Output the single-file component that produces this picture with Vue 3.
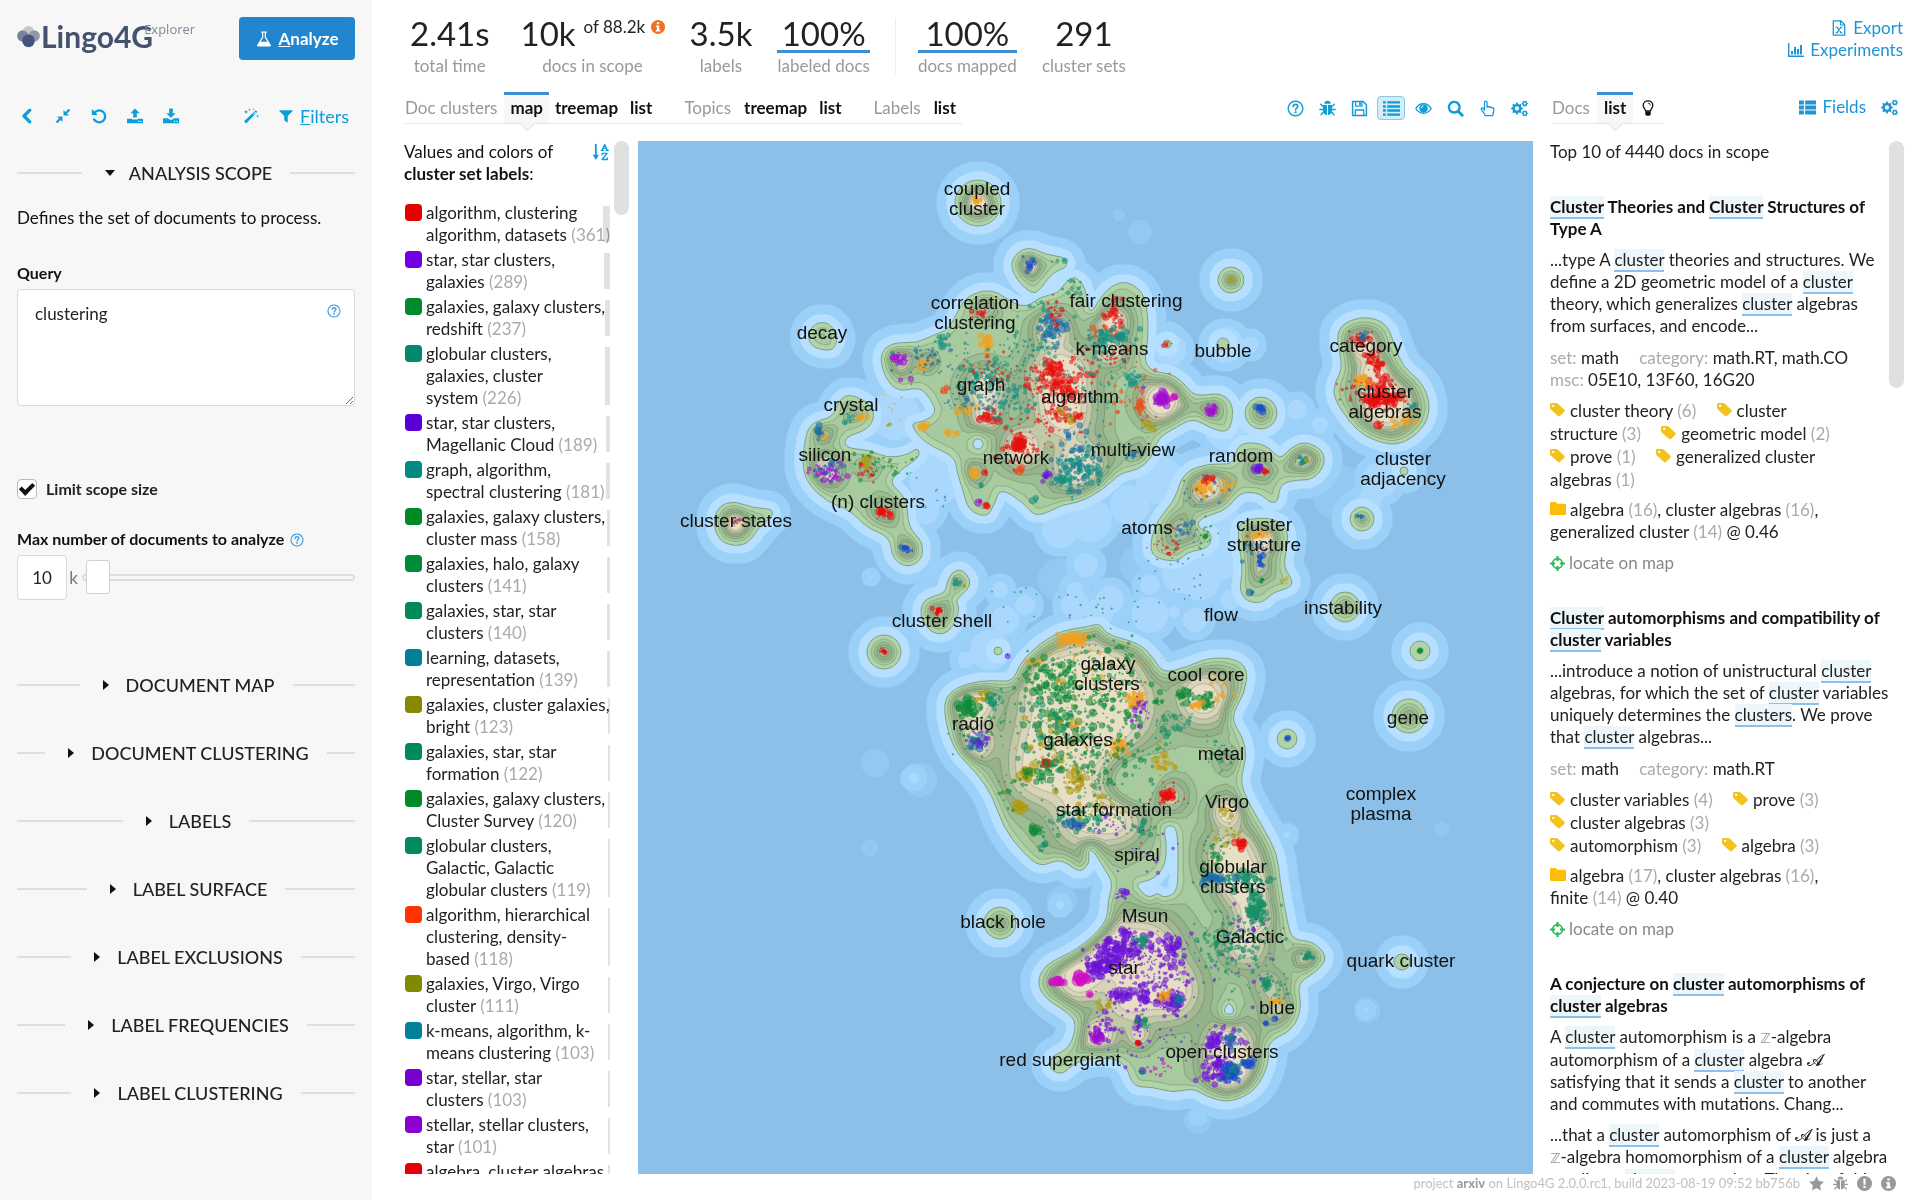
<template>
  <div class="app">
    <aside class="sidebar">
      <div class="brand-row">
        <a href="#" class="brand">
          <Icon name="logo" class="brand-mark" />
          <span class="brand-name">Lingo4G</span>
          <span class="brand-sub">Explorer</span>
        </a>
        <button class="analyze"><Icon name="flask" /><span><u>A</u>nalyze</span></button>
      </div>

      <div class="tools">
        <button v-for="t in ['left', 'compress', 'undo', 'upload', 'download']" :key="t" :aria-label="t" class="tool"><Icon :name="t" /></button>
        <button class="tool wand" aria-label="wand"><Icon name="wand" /></button>
        <button class="tool filters"><Icon name="filter" /><span><u>F</u>ilters</span></button>
      </div>

      <button class="section"><span class="caret open"></span>ANALYSIS SCOPE</button>
      <p class="about">Defines the set of documents to process.</p>

      <label class="field-label" for="query">Query</label>
      <div class="query-box">
        <textarea id="query" v-model="query"></textarea>
        <Icon name="help" class="query-help" />
      </div>

      <div class="check-row">
        <input id="limit" v-model="limit" type="checkbox" />
        <label for="limit">Limit scope size</label>
      </div>

      <label class="field-label max-label" for="maxdocs">Max number of documents to analyze <Icon name="help" class="label-help" /></label>
      <div class="max-row">
        <input id="maxdocs" v-model="maxDocs" type="text" />
        <span>k</span>
        <input v-model="slider" type="range" min="0" max="100" aria-label="Max number of documents" />
      </div>

      <div class="sections">
        <button v-for="s in sections" :key="s" class="section"><span class="caret"></span>{{ s }}</button>
      </div>
    </aside>

    <main class="main">
      <header class="top">
        <div class="stats">
          <template v-for="s in stats" :key="s.label">
            <div v-if="s.split" class="split"></div>
            <div class="stat">
              <span class="num" :class="{ lined: s.lined }">{{ s.value }}<small v-if="s.of">{{ s.of }} <Icon name="info" class="orange" /></small></span>
              <span class="cap">{{ s.label }}</span>
            </div>
          </template>
        </div>
        <nav class="top-links">
          <a href="#"><Icon name="excel" />Export</a>
          <a href="#"><Icon name="chart" />Experiments</a>
        </nav>
      </header>

      <div class="bars">
        <nav class="tabs">
          <span>Doc clusters</span>
          <a href="#" class="active">map</a><a href="#">treemap</a><a href="#">list</a>
          <span class="next">Topics</span>
          <a href="#">treemap</a><a href="#">list</a>
          <span class="next">Labels</span>
          <a href="#">list</a>
        </nav>
        <div class="map-tools">
          <button v-for="t in mapTools" :key="t" :aria-label="t" :class="{ on: t === 'list' }"><Icon :name="t" /></button>
        </div>
        <div class="docs-bar">
          <nav class="tabs">
            <span>Docs</span>
            <a href="#" class="active">list</a>
            <a href="#" aria-label="hints" class="bulb"><Icon name="bulb" /></a>
          </nav>
          <div class="docs-tools">
            <button><Icon name="fields" />Fields</button>
            <button aria-label="settings"><Icon name="cogs" /></button>
          </div>
        </div>
      </div>

      <div class="content">
        <section class="legend">
          <div class="legend-body">
            <div class="legend-head">
              <div>Values and colors of<br /><b>cluster set labels</b>:</div>
              <button aria-label="sort"><Icon name="sort" /></button>
            </div>
            <ul>
              <li v-for="(l, i) in labels" :key="i">
                <i class="swatch" :style="{ background: l[2] }"></i>
                <span>{{ l[0] }}&nbsp;<em>({{ l[1] }})</em></span>
                <i class="bar" :style="{ width: Math.max(2, Math.round(l[1] / 50)) + 'px' }"></i>
              </li>
            </ul>
          </div>
          <div class="scroll"><i class="short"></i></div>
        </section>

        <section class="map">
          <canvas ref="canvas" :width="VIEW.w" :height="VIEW.h"></canvas>
          <svg :viewBox="`${VIEW.x} ${VIEW.y} ${VIEW.w} ${VIEW.h}`" preserveAspectRatio="xMidYMid slice">
            <text v-for="p in places" :key="p[0] + p[1]" :x="p[1]" :y="p[2]">{{ p[0] }}</text>
          </svg>
        </section>

        <section class="docs">
          <div class="docs-body">
            <p class="docs-top">Top 10 of 4440 docs in scope</p>
            <article v-for="(d, i) in docs" :key="i">
              <h3><Marked :text="d.title" /></h3>
              <p v-for="t in d.text" :key="t" class="excerpt"><Marked :text="t" /></p>
              <template v-if="d.meta">
                <p class="meta"><template v-for="m in d.meta" :key="m[0]"><span><em>{{ m[0] }}:</em> {{ m[1] }}</span>{{ ' ' }}</template></p>
                <p class="tags"><template v-for="t in d.tags" :key="t[0]"><span class="tag"><span class="first"><Icon name="tag" />{{ head(t) }}</span>{{ rest(t) }}&nbsp;<em>({{ t[1] }})</em></span>{{ ' ' }}</template></p>
                <p class="folder"><Icon name="folder" /><template v-for="(f, k) in d.folders" :key="f[0]">{{ k ? ', ' : '' }}{{ f[0] }}&nbsp;<em>({{ f[1] }})</em></template> @ {{ d.score }}</p>
                <a href="#" class="locate"><Icon name="target" />locate on map</a>
              </template>
            </article>
          </div>
          <div class="scroll"><i class="long"></i></div>
        </section>
      </div>

      <footer>
        <span>project <b>arxiv</b> on Lingo4G 2.0.0.rc1, build 2023-08-19 09:52 bb756b</span>
        <Icon name="star" /><Icon name="bug" /><Icon name="alert" /><Icon name="info" />
      </footer>
    </main>
  </div>
</template>

<script setup>
import { h, ref, onMounted } from 'vue'

const query = ref('clustering')
const limit = ref(true)
const maxDocs = ref('10')
const slider = ref(1)
const canvas = ref(null)

// ---- icons, all on a 16x16 grid
const gear = (x, y, r, t) => {
  let d = ''
  const n = t * 4
  for (let i = 0; i < n; i++) {
    const a = ((i - 0.5) / n) * Math.PI * 2
    const rr = i % 4 < 2 ? r : r * 0.76
    d += (i ? 'L' : 'M') + (x + rr * Math.cos(a)).toFixed(2) + ' ' + (y + rr * Math.sin(a)).toFixed(2)
  }
  const c = r * 0.36
  return d + `ZM${x - c} ${y}a${c} ${c} 0 1 0 ${2 * c} 0a${c} ${c} 0 1 0 ${-2 * c} 0Z`
}
const line = (d, w = 1.4) => `<path d="${d}" fill="none" stroke="currentColor" stroke-width="${w}" stroke-linecap="round" stroke-linejoin="round"/>`
const fill = (d) => `<path d="${d}" fill="currentColor" fill-rule="evenodd"/>`

const icons = {
  logo: '<circle cx="8" cy="4.6" r="3.9" fill="#c3c7cc"/><circle cx="4" cy="7.6" r="3.9" fill="#77839a"/><circle cx="12" cy="7.6" r="3.9" fill="#8f99ab"/><circle cx="8" cy="11" r="4.4" fill="#44547a"/>',
  flask: fill('M5 .5h6v1.3h-1v4.4l4.6 7.2c.7 1.2.1 2.2-1.2 2.2H2.6c-1.3 0-1.9-1-1.2-2.2L6 6.2V1.8H5zM7.3 6.5 4.6 10.8h6.8L8.7 6.5V1.8H7.3z'),
  left: line('M10.8 2.2 5 8l5.8 5.8', 3.2),
  compress: fill('M7.5 8.5v5.4l-1.9-1.9-3.3 3.3-1.6-1.6L4 10.4 2.1 8.5zM8.5 7.5V2.1l1.9 1.9L13.7.7l1.6 1.6L12 5.6l1.9 1.9z'),
  undo: line('M3.6 4.4A6 6 0 1 1 3 11.4', 2.3) + fill('M.8 1v6h6z'),
  upload: fill('M8 .5l4.6 4.8H9.8v4.2H6.2V5.3H3.4zM0 10.8h5.2v.7h5.6v-.7H16v4.4H0zM11 12.7v1.2h1.2v-1.2zM13.2 12.7v1.2h1.2v-1.2z'),
  download: fill('M6.2.5h3.6v4.7h2.8L8 10 3.4 5.2h2.8zM0 10.3h4.7L8 12.2l3.3-1.9H16v4.9H0zM11 12.7v1.2h1.2v-1.2zM13.2 12.7v1.2h1.2v-1.2z'),
  wand: fill('M12.8 2.2l1.6 1.6L3.2 15.4 1 13.3zM12.6 3.7 10 6.3l.6.5 2.6-2.6zM6.5.3l.4 1.1 1.1.4-1.1.4-.4 1.1-.4-1.1L5 1.8l1.1-.4zM3 1.8l.6 1.5 1.5.6-1.5.6L3 6l-.6-1.5L.9 3.9l1.5-.6zM14.6 6.6l.4 1 1 .4-1 .4-.4 1-.4-1-1-.4 1-.4zM10.4.2l.3.8.8.3-.8.3-.3.8-.3-.8-.8-.3.8-.3z'),
  filter: fill('M1 1.5h14c.6 0 .8.6.4 1L10 8v6.8c0 .5-.5.7-.9.4L6.3 13c-.2-.2-.3-.4-.3-.6V8L.6 2.5c-.4-.4-.2-1 .4-1z'),
  help: line('M8 1.2a6.8 6.8 0 1 0 .01 0z', 1.3) + line('M5.9 6.2c.1-2.7 4.3-2.6 4.2-.1 0 1.5-2 1.6-2 3.1', 1.6) + fill('M7.1 10.7h1.9v1.7H7.1z'),
  info: fill('M8 0a8 8 0 1 0 .01 0zM6.7 2.7h2.7v2.2H6.7zM5.6 6.3h3.8v5h1.2v1.8H5.5v-1.8h1.2V8.1H5.6z'),
  alert: fill('M8 0a8 8 0 1 0 .01 0zM6.7 2.8h2.6L9 9.2H7zM6.8 10.4h2.4v2.3H6.8z'),
  excel: line('M2.3.8h7.4l4 4v10.4H2.3z', 1.3) + line('M9.5 1v4h4M5.8 7.2l4.4 5.6M10.2 7.2l-4.4 5.6M5 7.2h1.7M9.3 7.2H11M5 12.8h1.7M9.3 12.8H11', 1.1),
  chart: fill('M0 1h1.4v12.6H16V15H0zM3 9h2v3.6H3zM6 5h2v7.6H6zM9 7h2v5.6H9zM12 3h2v9.6h-2z'),
  bug: fill('M5 3.6a3 3 0 0 1 6 0zM4 4.6h3.5v9.8C5 14 3.6 12 3.6 9.5zM8.5 4.6H12l.4 4.9c0 2.5-1.4 4.5-3.9 4.9z') + line('M3.8 6.2 1.6 4M12.2 6.2 14.4 4M3.6 9H.8M12.4 9h2.8M4 11.5 1.8 14M12 11.5l2.2 2.5', 1.3),
  save: line('M1.5 1.5h10l3 3v10h-13z') + line('M4.3 1.7v4h6v-4M4 14.3V9.4h8v4.9', 1.2) + fill('M7.6 2h1.7v3H7.6z'),
  list: fill('M0 1.2h2.6v2.2H0zM4 1.2h12v2.2H4zM0 5h2.6v2.2H0zM4 5h12v2.2H4zM0 8.8h2.6V11H0zM4 8.8h12V11H4zM0 12.6h2.6v2.2H0zM4 12.6h12v2.2H4z'),
  eye: line('M.8 8C4.2 2 11.8 2 15.2 8 11.8 14 4.2 14 .8 8z', 1.3) + fill('M8 3.9a4 4 0 1 0 .01 0z') + '<path d="M6 7.6a2 2 0 0 1 2-2" fill="none" stroke="#fff" stroke-width=".8"/>',
  search: line('M6.8 1.8a5 5 0 1 0 .01 0z', 2.2) + line('M10.8 10.8 14.3 14.3', 2.7),
  hand: line('M5.2 9.4V2.3a1.2 1.2 0 0 1 2.4 0v4.5c.3-1 2.2-.9 2.3.3.5-.8 2-.6 2.2.4.6-.5 1.9-.2 1.9 1.1 0 2.8-.9 3.6-1.1 6.2H5.8C5.6 12.7 3.4 11 2.2 9c-.5-1.3.9-2 1.7-1.2z', 1.2),
  cogs: fill(gear(5.6, 8, 5.6, 8) + gear(13, 3.4, 3, 6) + gear(13, 12.6, 3, 6)),
  bulb: line('M5.6 11C5.4 9 3.2 8 3.2 5.3c0-6 9.6-6 9.6 0C12.8 8 10.6 9 10.4 11z', 1.3) + line('M8.2 3.2c1.2 0 2 .7 2 1.7', 0.9) + fill('M5.3 11.6h5.4v2.6L9.3 15.7H6.7L5.3 14.2z'),
  fields: fill('M0 1.5h4.6v3.6H0zM5.8 1.5H16v3.6H5.8zM0 6.2h4.6v3.6H0zM5.8 6.2H16v3.6H5.8zM0 10.9h4.6v3.6H0zM5.8 10.9H16v3.6H5.8z'),
  sort: line('M3.6 1v12', 1.7) + fill('M.6 10.6h6L3.6 15.6z') + line('M9.4 6.3 11.9.9l2.5 5.4M8.7 6.5h2M13.2 6.5h2.2M10.4 4.6h3M9.6 10.6V9.3h4.6L9.5 15h4.9v-1.4', 1.3),
  tag: fill('M0 2.4C0 1.5.6 1 1.4 1h5.2c.6 0 1.3.3 1.8.8l6.9 6.5c.7.7.7 1.3 0 2L10.6 15c-.7.6-1.3.6-2 0L.9 8C.4 7.5 0 6.9 0 6.3zM3.4 2.8a1.3 1.3 0 1 0 .01 0z'),
  folder: fill('M0 2.5C0 1.6.5 1 1.4 1h3.9C6.3 1 6.8 1.7 6.8 2.7h7.6c1 0 1.6.6 1.6 1.5v8.3c0 1-.6 1.5-1.5 1.5h-13C.6 14 0 13.5 0 12.5z'),
  target: line('M8 2.8A5.2 5.2 0 0 0 2.8 8 5.2 5.2 0 0 0 8 13.2 5.2 5.2 0 0 0 13.2 8 5.2 5.2 0 0 0 8 2.8z', 1.7) + fill('M6.9 0h2.2v5.4H6.9zM6.9 10.6h2.2V16H6.9zM0 6.9h5.4v2.2H0zM10.6 6.9H16v2.2h-5.4z'),
  star: fill('M8 .3l2.4 5 5.4.8-3.9 3.9.9 5.5L8 12.9l-4.8 2.6.9-5.5L.2 6.1l5.4-.8z'),
}
const Icon = (props) => h('svg', { class: 'icon', viewBox: '0 0 16 16', 'aria-hidden': 'true', innerHTML: icons[props.name] })
Icon.props = ['name']

// words between asterisks are query hits, _x_ is a dimmed symbol
const Marked = (props) =>
  props.text.split(/(\*[^*]+\*|_[^_]+_)/).map((p) => {
    if (p[0] === '*') return h('mark', p.slice(1, -1))
    if (p[0] === '_') return h('span', { class: 'dim' }, p.slice(1, -1))
    return p
  })
Marked.props = ['text']

// the tag icon must stay on the line of the first word
const head = (t) => t[0].split(' ')[0]
const rest = (t) => t[0].slice(head(t).length)

const sections = ['DOCUMENT MAP', 'DOCUMENT CLUSTERING', 'LABELS', 'LABEL SURFACE', 'LABEL EXCLUSIONS', 'LABEL FREQUENCIES', 'LABEL CLUSTERING']

const stats = [
  { value: '2.41s', label: 'total time' },
  { value: '10k', of: 'of 88.2k', label: 'docs in scope' },
  { value: '3.5k', label: 'labels' },
  { value: '100%', label: 'labeled docs', lined: true },
  { value: '100%', label: 'docs mapped', lined: true, split: true },
  { value: '291', label: 'cluster sets' },
]

const mapTools = ['help', 'bug', 'save', 'list', 'eye', 'search', 'hand', 'cogs']

const labels = [
  ['algorithm, clustering algorithm, datasets', 361, '#e60000'],
  ['star, star clusters, galaxies', 289, '#7300e0'],
  ['galaxies, galaxy clusters, redshift', 237, '#008a2e'],
  ['globular clusters, galaxies, cluster system', 226, '#008a6c'],
  ['star, star clusters, Magellanic Cloud', 189, '#5a00d6'],
  ['graph, algorithm, spectral clustering', 181, '#008a85'],
  ['galaxies, galaxy clusters, cluster mass', 158, '#008a24'],
  ['galaxies, halo, galaxy clusters', 141, '#008a3a'],
  ['galaxies, star, star clusters', 140, '#008a55'],
  ['learning, datasets, representation', 139, '#007f96'],
  ['galaxies, cluster galaxies, bright', 123, '#858a00'],
  ['galaxies, star, star formation', 122, '#008a58'],
  ['galaxies, galaxy clusters, Cluster Survey', 120, '#008a2a'],
  ['globular clusters, Galactic, Galactic globular clusters', 119, '#008a62'],
  ['algorithm, hierarchical clustering, density-based', 118, '#ff3300'],
  ['galaxies, Virgo, Virgo cluster', 111, '#808a00'],
  ['k-means, algorithm, k-means clustering', 103, '#00839a'],
  ['star, stellar, star clusters', 103, '#7a00d0'],
  ['stellar, stellar clusters, star', 101, '#8c00d2'],
  ['algebra, cluster algebras, cluster', 98, '#e6000a'],
]

const docs = [
  {
    title: '*Cluster* Theories and *Cluster* Structures of Type A',
    text: ['...type A *cluster* theories and structures. We define a 2D geometric model of a *cluster* theory, which generalizes *cluster* algebras from surfaces, and encode...'],
    meta: [['set', 'math'], ['category', 'math.RT, math.CO'], ['msc', '05E10, 13F60, 16G20']],
    tags: [['cluster theory', 6], ['cluster structure', 3], ['geometric model', 2], ['prove', 1], ['generalized cluster algebras', 1]],
    folders: [['algebra', 16], ['cluster algebras', 16], ['generalized cluster', 14]],
    score: '0.46',
  },
  {
    title: '*Cluster* automorphisms and compatibility of *cluster* variables',
    text: ['...introduce a notion of unistructural *cluster* algebras, for which the set of *cluster* variables uniquely determines the *clusters*. We prove that *cluster* algebras...'],
    meta: [['set', 'math'], ['category', 'math.RT']],
    tags: [['cluster variables', 4], ['prove', 3], ['cluster algebras', 3], ['automorphism', 3], ['algebra', 3]],
    folders: [['algebra', 17], ['cluster algebras', 16], ['finite', 14]],
    score: '0.40',
  },
  {
    title: 'A conjecture on *cluster* automorphisms of *cluster* algebras',
    text: [
      'A *cluster* automorphism is a _ℤ_-algebra automorphism of a *cluster* algebra 𝓐 satisfying that it sends a *cluster* to another and commutes with mutations. Chang...',
      '...that a *cluster* automorphism of 𝓐 is just a _ℤ_-algebra homomorphism of a *cluster* algebra sending a *cluster* to another. The aim of this article is to prove it.',
    ],
  },
]

// ---- map
const VIEW = { x: 638, y: 141, w: 895, h: 1033 }

const places = [
  ['coupled', 977, 195], ['cluster', 977, 215], ['correlation', 975, 309], ['clustering', 975, 329],
  ['fair clustering', 1126, 307], ['k-means', 1112, 355], ['decay', 822, 339], ['bubble', 1223, 357],
  ['graph', 981, 391], ['algorithm', 1080, 403], ['crystal', 851, 411], ['silicon', 825, 461],
  ['network', 1016, 464], ['multi-view', 1133, 456], ['random', 1241, 462], ['category', 1366, 352],
  ['cluster', 1385, 398], ['algebras', 1385, 418], ['cluster', 1403, 465], ['adjacency', 1403, 485],
  ['(n) clusters', 878, 508], ['cluster states', 736, 527], ['atoms', 1147, 534], ['cluster', 1264, 531],
  ['structure', 1264, 551], ['instability', 1343, 614], ['flow', 1221, 621], ['cluster shell', 942, 627],
  ['galaxy', 1108, 670], ['clusters', 1107, 690], ['cool core', 1206, 681], ['radio', 973, 730],
  ['gene', 1408, 724], ['galaxies', 1078, 746], ['metal', 1221, 760], ['star formation', 1114, 816],
  ['Virgo', 1227, 808], ['complex', 1381, 800], ['plasma', 1381, 820], ['spiral', 1137, 861],
  ['globular', 1233, 873], ['clusters', 1233, 893], ['Msun', 1145, 922], ['black hole', 1003, 928],
  ['Galactic', 1250, 943], ['quark cluster', 1401, 967], ['star', 1124, 974], ['blue', 1277, 1014],
  ['open clusters', 1222, 1058], ['red supergiant', 1060, 1066],
]

// coast lines
const coasts = [
  [880,358,885,347,898,342,917,343,933,335,948,330,957,313,965,298,983,290,998,292,1012,303,1027,307,1040,297,1058,293,1065,283,1073,276,1083,283,1087,297,1090,315,1100,298,1112,285,1127,281,1143,292,1148,313,1148,343,1144,361,1153,372,1170,373,1183,382,1193,395,1207,395,1220,393,1232,402,1233,420,1227,433,1210,428,1193,418,1175,428,1158,438,1152,458,1138,470,1120,473,1103,490,1080,502,1062,505,1053,510,1035,517,1023,502,1000,488,995,503,987,518,968,510,963,490,957,473,955,457,933,447,920,438,910,423,923,422,937,413,930,398,920,387,898,392,885,378],
  [1010,265,1017,252,1030,247,1047,255,1065,257,1068,267,1053,272,1042,287,1035,294,1027,290,1017,280],
  [806,433,813,422,833,417,837,403,848,393,870,403,875,417,867,430,845,437,845,448,870,450,887,458,907,455,918,447,920,457,903,468,888,482,907,498,908,527,923,542,922,560,907,568,892,558,890,537,867,528,850,510,827,502,807,483,802,463],
  [713,520,720,505,735,501,753,508,773,509,772,517,758,528,750,542,735,547,718,540],
  [807,335,815,323,828,322,838,335,835,348,827,351,812,347],
  [947,582,952,572,962,569,971,580,968,590,955,600,960,609,953,627,943,635,930,632,920,617,922,603,930,597,945,593],
  [1336,337,1343,323,1365,316,1387,323,1395,347,1403,367,1423,383,1431,407,1423,430,1397,447,1367,438,1350,423,1333,397,1335,382,1343,367],
  [1237,447,1247,442,1267,445,1280,460,1290,448,1305,441,1323,450,1325,465,1313,480,1293,480,1280,485,1278,502,1270,503,1260,493,1240,492,1227,510,1200,518,1197,528,1212,532,1210,548,1187,552,1178,562,1153,558,1150,543,1157,520,1175,500,1183,472,1210,463,1233,465],
  [1237,533,1242,520,1270,517,1287,527,1288,543,1283,567,1293,580,1290,588,1273,592,1263,603,1247,602,1239,590,1243,570],
  [943,710,948,693,967,683,993,680,1013,682,1020,663,1040,643,1063,630,1087,627,1100,623,1107,635,1140,643,1155,660,1163,673,1187,667,1207,658,1233,658,1248,668,1245,693,1230,718,1243,737,1247,757,1240,780,1247,800,1263,827,1277,853,1280,880,1287,920,1292,940,1313,941,1328,957,1317,972,1297,983,1302,1007,1293,1030,1267,1042,1270,1060,1257,1090,1230,1103,1207,1097,1193,1088,1173,1093,1153,1087,1133,1087,1127,1067,1113,1057,1077,1060,1063,1075,1050,1070,1050,1057,1070,1048,1077,1023,1067,1012,1043,997,1037,980,1047,963,1077,950,1107,923,1108,900,1113,883,1105,870,1093,850,1088,851,1090,863,1080,873,1067,863,1057,860,1040,867,1023,853,1003,827,993,797,977,773,953,750],
]
const lakes = [
  [1163,827,1175,825,1178,840,1178,870,1177,893,1163,898,1158,892,1150,898,1142,893,1135,883,1153,880,1165,866,1167,845],
  [1223,1012,1229,1001,1235,1012,1229,1015],
]
// round islands: x, y, radius
const islets = [
  [978,203,23],[884,652,17],[1231,280,13],[1261,413,16],[1362,519,12],[1345,607,15],[1420,651,10],
  [1409,716,17],[1287,739,10],[1000,923,16],[1402,962,8],[1167,344,4],[1223,344,6],[1404,471,4],[998,651,4],
]
// shallow water without land
const shelves = [
  [895,415,25],[935,480,26],[925,510,14],[1170,350,16],[1225,345,18],[1250,345,8],[1297,410,10],[1225,430,20],
  [1160,480,24],[1130,505,20],[1090,520,22],[1060,530,18],[1225,535,26],[1220,560,20],[1200,580,20],[1180,575,18],
  [1150,585,10],[1086,565,12],[1075,590,8],[1000,590,8],[1025,605,10],[1005,620,14],[990,650,20],[966,660,8],
  [1075,605,14],[1100,612,14],[1150,615,18],[1174,612,6],[1110,600,14],[1380,480,18],[1370,500,12],[1320,425,8],
  [914,778,5],[1195,620,12],[1060,905,4],[1366,1010,2],[1198,1117,1],[871,577,1],[1287,835,3],[1230,600,10],[1055,490,30],
]
const faint = [[1119,215,6],[1140,232,12],[875,763,14],[920,780,17],[870,848,8],[1080,430,8],[1442,829,7],[1062,900,15],[1287,835,13],[1198,1120,14],[1367,1010,13],[871,577,7],[1340,493,28],[1060,580,22],[1140,565,20],[1185,600,22]]

// hill tops: x, y, spread, height; a negative height digs a hollow
const hills = [
  [978,202,10,7],[1029,265,8,6],[985,308,9,4],[899,360,9,6],[926,361,7,4],[1052,330,13,7],[1112,322,12,7],[1110,350,12,6],
  [985,388,15,7],[985,415,12,6],[1060,375,22,8],[1063,412,22,7],[1022,447,15,7],[1078,465,20,7],[1161,400,15,8],[1210,408,8,4],
  [975,472,8,4],[1138,452,8,3],[825,470,11,7],[822,432,8,4],[884,510,10,4],[907,549,8,5],[868,466,8,3],[852,412,8,2],
  [735,523,10,7],[938,612,9,4],[957,582,6,3],[1362,345,12,7],[1373,373,13,7],[1386,405,19,8],[1207,487,13,7],[1260,468,9,4],
  [1303,459,10,6],[1180,530,12,4],[1261,540,11,7],[1258,567,10,4],[973,703,16,8],[975,742,14,7],[1055,685,27,7],[1095,675,30,7],
  [1115,705,30,7],[1055,735,32,7],[1100,740,28,6],[1040,772,26,6],[1080,785,24,5],[1085,818,26,6],[1118,818,20,6],[1203,698,21,7],[1168,795,13,5],
  [1228,760,9,3],[1227,812,12,7],[1232,855,20,7],[1245,885,18,8],[1254,915,14,7],[1245,945,17,6],[1105,950,25,7],[1145,950,26,7],
  [1168,990,24,7],[1078,978,18,7],[1128,1000,22,6],[1098,1035,13,7],[1138,1035,10,5],[1228,1045,19,7],[1230,1070,19,7],
  [1306,957,9,5],[1268,985,13,4],[1277,1008,13,4],[884,652,8,4],[1231,280,6,4],[1261,413,8,3],[1362,519,5,3],[1345,607,7,3],
  [1409,716,8,3],[1000,923,8,3],[823,335,8,1],[1133,780,17,-5],[1070,712,9,-2],
]

const C = {
  r: '#e6100f', o: '#f2a01e', ro: '#f04a1a', t: '#128f82', b: '#1a6ca8', n: '#1a50c8', g: '#0f8a38', G: '#178f68',
  p: '#a010d0', v: '#6c14d8', y: '#b09a10', m: '#cf10c4',
}
// document dots: colour, x, y, spread x, spread y, count, max radius
const dots = [
  ['o',978,200,3,2,14,3],['n',1029,265,3,4,22,3],['t',1057,260,4,1,4,3],['t',1075,285,6,6,18,2],
  ['r',978,313,7,3,20,3],['t',943,340,4,4,16,4],['p',899,359,5,3,24,4],['o',926,361,5,4,22,3],['b',928,360,9,7,16,2],
  ['p',905,380,5,2,4,3],['o',987,343,5,6,24,4],['b',1052,328,8,9,70,4],['r',1055,310,5,10,26,3],['t',1042,312,7,6,14,3],
  ['r',1113,318,6,12,40,4],['ro',1105,332,10,5,24,3],['v',1115,325,1,1,2,5],['t',1115,338,13,6,55,4],['t',1100,348,14,10,50,3],['r',1110,356,14,8,26,2],
  ['t',983,375,15,9,70,3],['r',985,372,16,10,24,2],['b',975,400,18,14,70,2],['o',967,409,5,3,22,4],['ro',943,391,3,2,6,4],['r',990,418,6,4,26,4],['t',1000,400,25,14,80,3],
  ['r',1056,367,5,4,30,5],['r',1050,380,17,15,60,4],['r',1072,380,14,18,55,4],['r',1065,415,15,15,50,3],['y',1068,416,4,4,12,4],['r',1078,416,3,3,12,4],['r',1040,395,25,22,80,2],
  ['r',1020,445,4,4,40,6],['ro',1020,470,4,2,12,5],['r',1022,447,12,12,50,3],['b',1078,460,14,18,100,3],['t',1080,470,14,14,90,4],['t',1062,480,6,4,24,4],['t',1035,500,2,2,6,4],
  ['b',930,360,22,12,40,2],['t',1010,360,24,18,60,2],['t',1035,345,20,16,50,2],['t',1100,390,26,24,60,2],['ro',1130,395,20,20,40,2],
  ['p',1161,399,5,4,60,5],['m',1173,398,3,2,8,4],['y',1150,428,4,5,20,4],['ro',1142,408,3,9,18,4],['t',1135,380,6,5,20,4],['b',1135,452,5,4,16,3],['v',1143,387,1,1,2,4],
  ['p',1213,409,3,3,22,4],['n',1261,409,3,2,20,4],['y',1231,279,2,2,8,3],['r',1168,344,4,2,6,3],
  ['o',923,426,3,2,12,5],['o',953,433,5,3,16,3],['o',973,472,3,2,12,5],['r',986,473,2,1,4,3],['t',981,486,1,1,4,4],['p',980,502,2,1,5,4],['r',987,505,1,1,4,4],['v',1047,475,3,4,12,3],
  ['t',850,418,6,5,12,3],['o',863,416,4,3,12,3],['b',820,432,3,4,14,4],['o',825,437,3,1,8,3],['b',828,470,9,7,50,3],['p',827,474,11,6,34,3],['y',868,460,5,5,20,3],['r',865,472,9,6,20,2],['g',882,466,22,8,40,2],
  ['r',884,512,4,3,34,4],['n',907,548,3,2,18,3],['o',736,522,3,2,10,3],['v',737,521,2,2,5,2],['r',937,611,3,2,24,4],['t',957,583,2,2,8,3],['y',965,586,1,1,4,3],['r',884,651,2,2,14,3],
  ['r',1360,338,8,4,36,3],['b',1364,336,3,2,9,3],['r',1375,362,6,9,44,4],['r',1382,400,14,5,110,5],['r',1383,385,10,5,44,4],['o',1362,381,7,4,26,4],['r',1381,424,3,2,8,5],['o',1405,422,9,5,30,3],['t',1413,405,4,3,12,3],['r',1350,390,10,12,20,2],
  ['o',1204,487,6,5,40,4],['r',1208,480,4,4,16,4],['o',1225,487,5,7,20,3],['b',1205,490,16,10,20,2],['v',1259,469,3,2,18,5],['r',1266,472,2,1,8,4],['t',1301,460,4,2,22,4],['y',1306,461,2,2,8,4],['b',1185,528,7,6,28,3],['r',1165,545,10,10,22,2],['g',1206,536,2,2,5,4],['g',1200,540,10,12,20,1],
  ['o',1258,535,7,2,40,3],['n',1261,560,2,5,28,4],['b',1258,548,9,8,26,2],['g',1262,579,1,2,6,3],['b',1251,593,1,1,6,4],['y',1286,579,3,4,8,2],['b',1361,517,2,1,10,3],['g',1420,651,1,1,8,3],['n',1287,738,1,1,6,3],
  ['b',1095,610,60,14,16,1],['b',1190,565,30,22,20,1],['g',1060,595,60,18,12,1],['v',1007,655,1,1,2,4],['b',935,500,10,10,8,1],['o',892,405,6,14,8,1],['y',889,424,1,1,4,3],
  ['g',968,708,6,5,60,5],['y',985,697,7,4,20,3],['G',995,700,6,6,30,4],['b',976,743,6,5,40,4],['v',980,740,6,5,20,4],['g',980,725,18,18,40,2],
  ['o',1072,640,9,4,60,4],['o',1035,661,5,3,18,3],['g',1050,680,18,14,110,4],['g',1095,665,28,16,90,3],['g',1060,720,22,22,130,4],['G',1050,730,18,20,70,4],['g',1110,700,26,24,120,3],['o',1137,697,6,6,36,4],['v',1140,712,6,10,28,3],
  ['y',1060,745,28,28,90,3],['o',1075,728,3,4,16,3],['o',1120,747,5,5,28,4],['g',1100,750,34,26,130,3],['o',1100,670,30,20,60,2],['y',1026,773,5,4,30,5],['y',1078,780,9,8,44,4],['r',1045,763,3,2,12,4],['g',1040,772,14,9,46,4],['G',1100,775,34,20,80,2],
  ['y',1020,808,4,3,24,6],['g',1037,831,4,3,24,4],['G',1043,847,4,3,14,3],['g',1010,790,6,12,16,3],['y',1095,805,16,8,50,3],['G',1080,820,22,9,90,3],['b',1075,822,7,3,20,4],['G',1140,830,10,5,34,3],['v',1105,825,24,9,26,2],['r',1168,796,4,4,46,4],['r',1170,795,10,9,24,2],['o',1160,762,6,6,20,3],
  ['g',1185,695,7,6,34,4],['g',1206,700,5,5,44,4],['o',1197,705,5,3,22,3],['o',1222,688,8,9,26,2],['G',1170,725,14,10,40,3],['g',1160,702,4,2,12,3],['G',1220,752,10,12,26,2],['y',1165,760,9,14,26,3],
  ['y',1226,813,4,5,22,4],['y',1228,835,12,8,24,3],['r',1240,843,3,3,26,4],['g',1215,850,10,12,36,3],['G',1248,880,14,5,80,4],['b',1215,878,12,3,40,4],['G',1256,908,6,9,120,4],['G',1240,925,20,12,60,2],['v',1254,928,1,1,4,3],['G',1225,945,18,8,66,3],['G',1235,960,28,20,90,2],['G',1267,983,4,5,30,4],['v',1245,950,22,28,30,2],
  ['v',1122,895,4,4,16,4],['v',1124,933,4,3,26,4],['v',1108,942,4,3,20,4],['v',1110,960,12,8,120,4],['v',1098,968,10,6,100,4],['v',1125,948,12,6,60,4],['v',1150,950,22,11,80,4],['G',1140,941,5,4,26,4],['v',1171,945,6,7,40,4],
  ['v',1120,996,8,4,50,4],['v',1143,995,4,6,40,4],['v',1160,985,18,14,70,3],['v',1172,1003,8,7,60,5],['o',1163,997,4,4,32,3],['b',1178,1000,3,4,16,4],['v',1145,970,30,20,100,2],['m',1083,978,4,3,50,6],['m',1058,982,4,2,26,5],['m',1089,994,1,1,4,4],['y',1103,1003,4,4,14,3],
  ['p',1097,1036,4,4,50,4],['v',1105,1025,9,10,40,3],['v',1137,1025,3,10,28,3],['G',1142,1022,4,6,22,3],['r',1138,1043,1,1,14,4],['v',1150,1040,36,18,50,2],['b',1142,1072,2,1,6,4],['m',1160,1070,12,4,16,2],
  ['v',1212,1042,4,5,30,4],['v',1225,1040,12,7,50,3],['b',1232,1040,6,6,30,3],['v',1220,1062,9,6,60,4],['n',1230,1073,6,6,80,5],['n',1248,1064,4,3,26,5],['G',1233,1070,5,4,12,3],['v',1212,1077,8,4,30,3],
  ['o',1276,1001,4,2,20,3],['n',1266,1023,1,1,6,5],['n',1276,1019,2,1,6,4],['G',1308,957,4,2,22,3],['G',1282,990,8,14,20,2],['v',1145,860,16,12,16,2],
]

function trace(ctx, p) {
  const n = p.length / 2
  const at = (i) => [p[((i + n) % n) * 2], p[((i + n) % n) * 2 + 1]]
  ctx.moveTo((at(-1)[0] + at(0)[0]) / 2, (at(-1)[1] + at(0)[1]) / 2)
  for (let i = 0; i < n; i++) {
    const [x, y] = at(i)
    const [nx, ny] = at(i + 1)
    ctx.quadraticCurveTo(x, y, (x + nx) / 2, (y + ny) / 2)
  }
  ctx.closePath()
}

function circles(ctx, list) {
  for (const [x, y, r] of list) {
    ctx.moveTo(x + r, y)
    ctx.arc(x, y, r, 0, 7)
  }
}

// reads the mask drawn by `paint` as an array of 0 / 1
function mask(paint) {
  const c = document.createElement('canvas')
  c.width = VIEW.w
  c.height = VIEW.h
  const ctx = c.getContext('2d')
  ctx.translate(-VIEW.x, -VIEW.y)
  paint(ctx)
  const px = ctx.getImageData(0, 0, VIEW.w, VIEW.h).data
  return Uint8Array.from({ length: VIEW.w * VIEW.h }, (_, i) => (px[i * 4 + 3] > 127 ? 1 : 0))
}

// euclidean distance from every pixel to the nearest one equal to `v`
function distance(m, v) {
  const { w, h: hh } = VIEW
  const d = new Float32Array(w * hh)
  const pass = (start, step, n) => {
    const f = new Float64Array(n)
    const s = new Int32Array(n)
    const z = new Float64Array(n + 1)
    for (let i = 0; i < n; i++) f[i] = d[start + i * step]
    let k = 0
    z[0] = -1e12
    z[1] = 1e12
    for (let q = 1; q < n; q++) {
      let x
      do {
        const r = s[k]
        x = (f[q] + q * q - f[r] - r * r) / (2 * (q - r))
      } while (x <= z[k] && --k > -1)
      k++
      s[k] = q
      z[k] = x
      z[k + 1] = 1e12
    }
    k = 0
    for (let q = 0; q < n; q++) {
      while (z[k + 1] < q) k++
      d[start + q * step] = (q - s[k]) ** 2 + f[s[k]]
    }
  }
  for (let i = 0; i < d.length; i++) d[i] = m[i] === v ? 0 : 1e7
  for (let x = 0; x < w; x++) pass(x, w, hh)
  for (let y = 0; y < hh; y++) pass(y * w, 1, w)
  return d.map(Math.sqrt)
}

const sea = [[140, 192, 232], [155, 208, 249], [183, 223, 255]]
const ground = [[177, 211, 168], [167, 202, 158], [156, 190, 147], [149, 179, 139], [164, 186, 149], [194, 201, 169], [216, 212, 185], [230, 222, 197]]

function drawMap() {
  const ctx = canvas.value.getContext('2d')
  const { w, h: hh } = VIEW
  const land = mask((c) => {
    c.beginPath()
    coasts.forEach((p) => trace(c, p))
    c.fill()
    c.beginPath()
    circles(c, islets)
    c.fill()
    c.globalCompositeOperation = 'destination-out'
    c.beginPath()
    lakes.forEach((p) => trace(c, p))
    circles(c, [[978, 444, 5]])
    c.fill()
  })
  const shelf = mask((c) => { c.beginPath(); circles(c, shelves); c.fill() })
  const pale = mask((c) => { c.beginPath(); circles(c, faint); c.fill() })
  const toLand = distance(land, 1)
  const toSea = distance(land, 0)
  const toShelf = distance(shelf, 1)
  const toPale = distance(pale, 1)

  const height = new Float32Array(w * hh)
  for (let y = 0, i = 0; y < hh; y++) {
    for (let x = 0; x < w; x++, i++) {
      if (!land[i]) continue
      let v = 0
      for (const [hx, hy, s, a] of hills) {
        const q = ((x + VIEW.x - hx) ** 2 + (y + VIEW.y - hy) ** 2) / (s * s)
        if (q > 9) continue
        const e = a * Math.exp(-q / 2.4)
        v = a > 0 ? Math.hypot(v, e) : Math.max(0, v + e)
      }
      const t = Math.min(1, toSea[i] / 16)
      height[i] = Math.min(7.6, v * t + Math.min(1.3, toSea[i] / 7))
    }
  }

  const img = ctx.createImageData(w, hh)
  const clamp = (v) => Math.max(0, Math.min(1, v))
  for (let i = 0; i < height.length; i++) {
    let c
    if (land[i]) {
      const v = height[i]
      const lv = Math.floor(v)
      const g = Math.hypot(v - (height[i + 1] || 0), v - (height[i + w] || 0)) + 0.004
      const edge = v > 0.8 ? clamp(1.1 - Math.abs(v - Math.round(v)) / g) : 0
      c = ground[lv].map((k) => k * (1 - 0.13 * edge))
    } else {
      const a = clamp(Math.max(19.5 - toLand[i], 9.5 - toShelf[i], 0.5 - toPale[i]))
      const b = clamp(Math.max(9.5 - toLand[i], 0.5 - toShelf[i]))
      c = sea[0].map((k, j) => k + (sea[1][j] - k) * a)
      c = c.map((k, j) => k + (sea[2][j] - k) * b)
    }
    img.data.set([c[0], c[1], c[2], 255], i * 4)
  }
  ctx.putImageData(img, 0, 0)

  ctx.save()
  ctx.translate(-VIEW.x, -VIEW.y)
  ctx.strokeStyle = 'rgba(100,130,95,.65)'
  ctx.lineWidth = 1
  for (const p of [...coasts, ...lakes]) {
    ctx.beginPath()
    trace(ctx, p)
    ctx.stroke()
  }
  for (const p of [...islets, [978, 444, 5]]) {
    ctx.beginPath()
    circles(ctx, [p])
    ctx.stroke()
  }

  let seed = 7
  const rnd = () => (seed = (seed * 16807) % 2147483647) / 2147483647
  const gauss = () => (rnd() + rnd() + rnd() - 1.5) * 1.6
  for (const [c, x, y, sx, sy, n, max] of dots) {
    ctx.fillStyle = ctx.strokeStyle = C[c]
    for (let i = 0; i < n; i++) {
      ctx.beginPath()
      ctx.arc(x + gauss() * sx, y + gauss() * sy, 0.6 + (max - 0.6) * rnd() ** 2.4, 0, 7)
      ctx.globalAlpha = 0.55
      ctx.fill()
      ctx.globalAlpha = 0.35
      ctx.stroke()
    }
  }
  ctx.restore()
}

onMounted(drawMap)
</script>

<style>
body {
  margin: 0;
}
mark {
  color: inherit;
  background: #edf6fa;
  border-bottom: 2px solid #8fc0ea;
}
.dim {
  font-size: 14px;
  color: #999;
}
</style>

<style scoped>
.app {
  display: grid;
  grid-template-columns: 372px minmax(0, 1fr);
  grid-template-rows: minmax(0, 1fr);
  height: 100vh;
  overflow: hidden;
  font-family: Lato, "DejaVu Sans", sans-serif;
  font-size: 17px;
  line-height: 22px;
  color: #222;
  background: #fff;
}

button {
  font: inherit;
  color: inherit;
  padding: 0;
  border: 0;
  background: none;
  cursor: pointer;
}

a {
  text-decoration: none;
}

p,
ul,
h3 {
  margin: 0;
  padding: 0;
}

em {
  font-style: normal;
  color: #aaa;
}

.icon {
  width: 16px;
  height: 16px;
  flex: none;
}

/* sidebar */
.sidebar {
  display: flex;
  flex-direction: column;
  padding: 17px 17px 0;
  background: #f7f7f7;
}

.brand-row {
  display: flex;
  justify-content: space-between;
}

.brand {
  display: flex;
  align-items: flex-start;
  color: #44526e;
}

.brand-mark {
  width: 23px;
  height: 23px;
  margin-top: 8px;
}

.brand-name {
  margin-left: 1px;
  font-size: 30px;
  font-weight: 700;
  line-height: 38px;
}

.brand-sub {
  margin-left: -9px;
  font-family: "Open Sans", sans-serif;
  font-size: 13px;
  line-height: 25px;
  color: #808796;
}

.analyze {
  display: flex;
  align-items: center;
  justify-content: center;
  gap: 7px;
  width: 116px;
  height: 43px;
  border-radius: 4px;
  background: #2185d0;
  color: #fff;
  font-weight: 700;
}

.tools {
  display: flex;
  align-items: center;
  gap: 18px;
  height: 22px;
  margin-top: 45px;
  padding: 0 6px 0 2px;
  color: #0d9ddb;
}

.tool {
  display: flex;
  align-items: center;
  gap: 7px;
  min-width: 18px;
  font-size: 18px;
}

.wand {
  margin-left: auto;
}

.filters .icon {
  width: 14px;
  height: 14px;
}

.section {
  display: flex;
  align-items: center;
  width: 100%;
  height: 22px;
  font-size: 18px;
  font-weight: 500;
  color: #222;
}

.section::before,
.section::after {
  content: "";
  flex: 1;
  height: 2px;
  background: #dedede;
}

.section::before {
  margin-right: 23px;
}

.section::after {
  margin-left: 18px;
}

.tools + .section {
  margin-top: 35px;
}

.caret {
  border: 5px solid transparent;
  border-left: 6px solid #111;
  border-right: 0;
  margin-right: 17px;
}

.caret.open {
  border: 5px solid transparent;
  border-top: 6px solid #111;
  border-bottom: 0;
  margin-right: 14px;
}

.about {
  margin-top: 23px;
  color: #111;
}

.field-label {
  margin-top: 33px;
  font-size: 16px;
  font-weight: 700;
  color: #111;
}

.query-box {
  position: relative;
  margin-top: 5px;
}

.query-box textarea {
  display: block;
  box-sizing: border-box;
  width: 100%;
  height: 117px;
  padding: 13px 17px;
  border: 1px solid #d8d8d8;
  border-radius: 4px;
  outline: 0;
  resize: vertical;
  font: inherit;
  color: #222;
}

.query-help {
  position: absolute;
  top: 15px;
  right: 14px;
  color: #3f9fe0;
}

.icon.query-help,
.icon.label-help {
  width: 14px;
  height: 14px;
}

.check-row {
  display: flex;
  align-items: center;
  gap: 9px;
  margin-top: 72px;
  font-size: 16px;
  font-weight: 700;
  color: #222;
}

.check-row input {
  appearance: none;
  box-sizing: border-box;
  width: 20px;
  height: 20px;
  margin: 0;
  border: 1px solid #bbb;
  border-radius: 4px;
  background: #fff;
}

.check-row input:checked::before {
  content: "";
  display: block;
  box-sizing: border-box;
  width: 14px;
  height: 9px;
  margin: 3px 0 0 2px;
  border: solid #111;
  border-width: 0 0 4px 4px;
  transform: rotate(-45deg);
}

.max-label {
  margin-top: 28px;
}

.label-help {
  margin-left: 2px;
  vertical-align: -2px;
  color: #3f9fe0;
}

.max-row {
  display: flex;
  align-items: center;
  margin-top: 5px;
  color: #777;
}

.max-row input[type="text"] {
  box-sizing: border-box;
  width: 50px;
  height: 45px;
  border: 1px solid #d8d8d8;
  border-radius: 4px;
  font: inherit;
  text-align: center;
  color: #222;
}

.max-row span {
  width: 15px;
  padding-right: 2px;
  box-sizing: border-box;
  text-align: center;
}

.max-row input[type="range"] {
  appearance: none;
  flex: 1;
  min-width: 0;
  height: 34px;
  margin: 0;
  background: none;
}

.max-row input[type="range"]::-webkit-slider-runnable-track {
  box-sizing: border-box;
  height: 7px;
  border: 2px solid #dedede;
  border-radius: 4px;
  background: #f7f7f7;
}

.max-row input[type="range"]::-webkit-slider-thumb {
  appearance: none;
  box-sizing: border-box;
  width: 24px;
  height: 34px;
  margin-top: -16px;
  border: 1px solid #d0d0d0;
  border-radius: 3px;
  background: #fff;
}

.sections {
  display: flex;
  flex-direction: column;
  gap: 46px;
  margin-top: 74px;
}

/* main */
.main {
  display: grid;
  grid-template-rows: 92px 49px minmax(0, 1fr) 26px;
  min-width: 0;
  min-height: 0;
}

.top {
  display: flex;
  justify-content: space-between;
  padding: 14px 17px 0 38px;
}

.stats {
  display: flex;
  align-items: flex-start;
  gap: 25px;
}

.stat {
  display: flex;
  flex-direction: column;
  align-items: center;
}

.stat:nth-child(2) {
  padding-left: 6px;
}

.num {
  display: flex;
  box-sizing: border-box;
  height: 39px;
  font-size: 33px;
  line-height: 38px;
  border-bottom: 3px solid transparent;
}

.num.lined {
  align-self: stretch;
  justify-content: center;
  border-color: #3d8fd1;
}

.num small {
  margin-left: 8px;
  font-size: 17px;
  line-height: 26px;
}

.num small .icon {
  width: 14px;
  height: 14px;
  margin-left: 1px;
  vertical-align: -1px;
  color: #f2711c;
}

.cap {
  margin-top: 2px;
  color: #999;
}

.split {
  width: 1px;
  height: 56px;
  margin-top: 4px;
  margin-right: -3px;
  background: #eee;
}

.top-links {
  display: flex;
  flex-direction: column;
  align-items: flex-end;
  padding-top: 3px;
}

.top-links a {
  display: flex;
  align-items: center;
  gap: 6px;
  color: #1e94d6;
}

.bars {
  display: flex;
  align-items: flex-start;
}

.tabs {
  display: flex;
  height: 31px;
  border-bottom: 1px solid #e6e6e6;
  line-height: 32px;
}

.bars > .tabs {
  margin-left: 33px;
}

.tabs span {
  padding-right: 7px;
  color: #999;
}

.tabs .next {
  margin-left: 26px;
}

.tabs a {
  position: relative;
  padding: 0 6px;
  font-weight: 700;
  color: #111;
}

.tabs a.active {
  box-sizing: border-box;
  height: 31px;
  line-height: 26px;
  border-top: 3px solid #3d8fd1;
  background: #f7f7f7;
}

.tabs a.active::after {
  content: "";
  position: absolute;
  left: 50%;
  bottom: -6px;
  width: 10px;
  height: 10px;
  margin-left: -5px;
  border: solid #e6e6e6;
  border-width: 0 1px 1px 0;
  background: #f7f7f7;
  transform: rotate(45deg);
}

.docs-bar .tabs a {
  padding: 0 7px;
}

.tabs .bulb {
  display: flex;
  align-items: center;
}

.map-tools {
  display: flex;
  gap: 4px;
  margin: 4px 0 0 auto;
}

.map-tools button {
  display: grid;
  place-items: center;
  box-sizing: border-box;
  width: 28px;
  height: 24px;
  border: 1px solid transparent;
  border-radius: 4px;
  color: #0d9ddb;
}

.map-tools .on {
  border-color: #8cc8e6;
  background: #d3eef9;
}

.docs-bar {
  display: flex;
  justify-content: space-between;
  box-sizing: border-box;
  width: 387px;
  padding: 0 22px 0 19px;
}

.docs-tools {
  display: flex;
  gap: 15px;
  height: 30px;
}

.docs-tools button {
  display: flex;
  align-items: center;
  gap: 6px;
  color: #1e94d6;
}

.map-tools .icon,
.docs-tools .icon {
  width: 17px;
  height: 17px;
}

.content {
  display: grid;
  grid-template-columns: 266px minmax(0, 1fr) 387px;
  grid-template-rows: minmax(0, 1fr);
  min-height: 0;
}

.legend {
  display: flex;
  min-height: 0;
  overflow: hidden;
}

.legend-body {
  flex: 1;
  padding-left: 32px;
}

.legend-head {
  display: flex;
  justify-content: space-between;
  align-items: flex-start;
  margin-bottom: 17px;
  color: #111;
}

.legend-head button {
  margin: 2px 1px 0 0;
  color: #0d9ddb;
}

.legend-head .icon {
  width: 17px;
  height: 18px;
}

.legend-body ul {
  list-style: none;
}

.legend-body li {
  position: relative;
  display: flex;
  gap: 4px;
  margin-bottom: 3px;
}

.swatch {
  flex: none;
  width: 17px;
  height: 17px;
  margin: 2px 0 0 1px;
  border-radius: 4px;
}

.legend-body li span {
  flex: 1;
}

.bar {
  position: absolute;
  top: 4px;
  bottom: 4px;
  right: 0;
  background: #e2e2e2;
  mix-blend-mode: multiply;
}

.legend .scroll {
  width: 28px;
  padding-left: 4px;
  box-sizing: border-box;
}

.scroll i {
  display: block;
  border-radius: 8px;
  background: #e0e0e0;
}

.scroll .short {
  width: 15px;
  height: 74px;
}

.scroll .long {
  width: 15px;
  height: 247px;
}

.map {
  position: relative;
  min-height: 0;
  overflow: hidden;
  background: #8cc0e8;
}

.map canvas,
.map svg {
  position: absolute;
  inset: 0;
  width: 100%;
  height: 100%;
  object-fit: cover;
}

.map text {
  font-family: "Liberation Sans", Arial, sans-serif;
  font-size: 19px;
  text-anchor: middle;
  fill: #111;
}

.docs {
  display: flex;
  min-height: 0;
  overflow: hidden;
}

.docs-body {
  flex: 1;
  min-width: 0;
  margin-right: -2px;
  padding-left: 17px;
}

.docs .scroll {
  width: 31px;
}

.docs article {
  margin-top: 33px;
}

.docs h3 {
  font-size: 17px;
  color: #111;
}

.excerpt {
  margin-top: 9px;
}

.meta {
  margin-top: 10px;
}

.meta span,
.tag {
  margin-right: 16px;
}

.tags {
  margin-top: 8px;
  line-height: 23px;
}

.first {
  white-space: nowrap;
}

.tags .icon {
  width: 15px;
  height: 15px;
  margin-right: 5px;
  color: #f2c31c;
}

.folder {
  margin-top: 8px;
}

.folder .icon {
  margin-right: 4px;
  vertical-align: -1px;
  color: #fbbd08;
}

.locate {
  display: flex;
  align-items: center;
  gap: 4px;
  margin-top: 9px;
  color: #888;
}

.locate .icon {
  width: 15px;
  height: 15px;
  color: #2fb457;
}

footer {
  display: flex;
  align-items: center;
  justify-content: flex-end;
  gap: 9px;
  padding: 0 24px 8px 0;
  font-size: 13px;
  color: #c0c0c0;
}

footer b {
  color: #999;
}

footer .icon {
  width: 15px;
  height: 15px;
  color: #999;
}
</style>
